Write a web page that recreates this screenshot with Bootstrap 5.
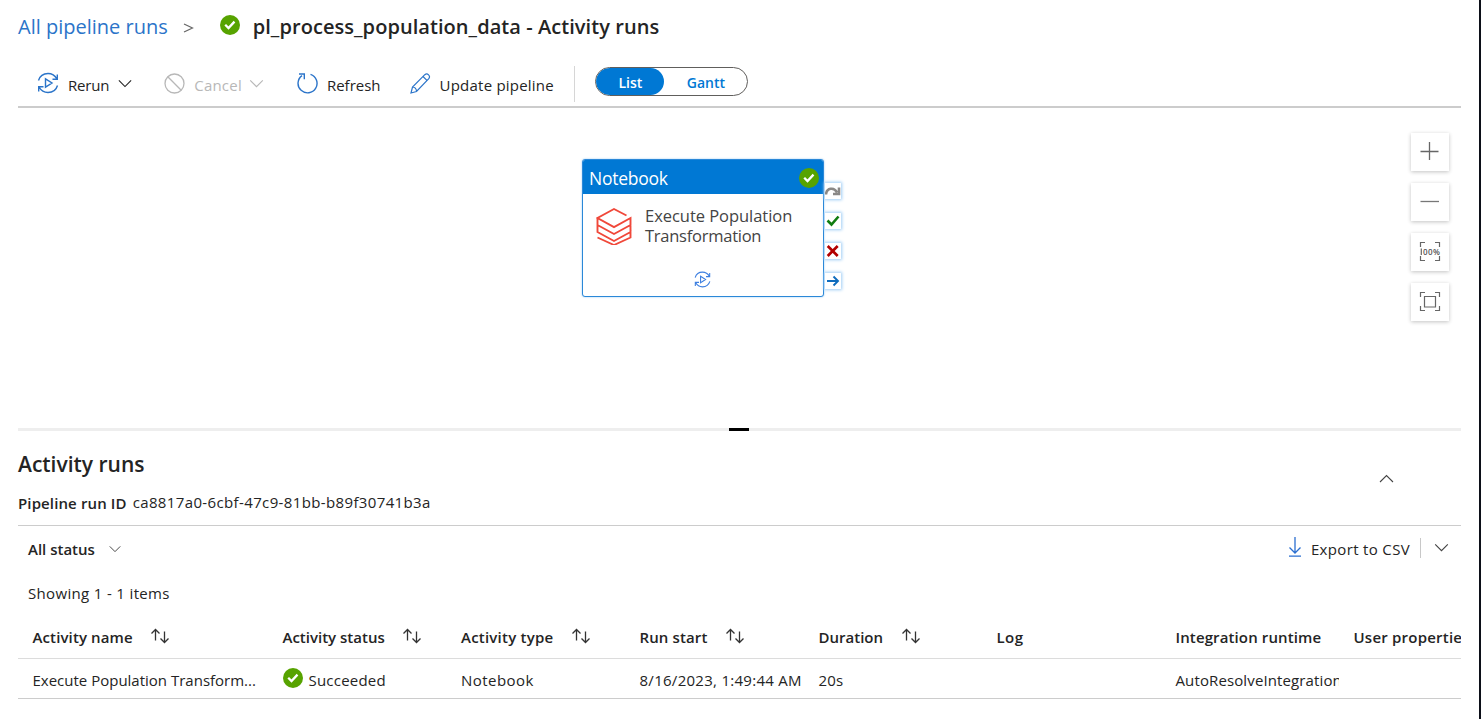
<!DOCTYPE html>
<html lang="en">
<head>
<meta charset="utf-8">
<title>Activity runs</title>
<link href="https://cdn.jsdelivr.net/npm/bootstrap@5.3.0/dist/css/bootstrap.min.css" rel="stylesheet">
<style>
body{font-family:"Open Sans","Noto Sans",sans-serif;font-size:15px;line-height:20px;color:#242424;background:#fff;height:719px;overflow:hidden;border-right:2px solid #0c0f18}
svg{display:block;flex:none;fill:none}
.page{padding:0 18px}
.semi{font-weight:560}
.ls1{letter-spacing:.12px}.ls2{letter-spacing:.22px}.ls3{letter-spacing:.34px}.ls4{letter-spacing:.47px}
.crumbs{height:54px;font-size:20px;white-space:nowrap}
.crumbs a{color:#2b74c9;text-decoration:none}
.crumbs .semi{letter-spacing:.06px}
.gt{margin:2px 0 0 15px}
.crumb-ok{margin:-4px 13px 0 25px}
.tools{height:54px;border-bottom:2px solid #ccc;padding:6px 0 0 19px}
.tool{color:#242424;gap:9px;white-space:nowrap}
.tool span{margin-top:4px}
.tool.off{color:#b8b8b8}
.gap-cancel{margin-left:32px}.gap-refresh{margin-left:33px}.gap-update{margin-left:29px}
.ic{color:#2b74c9}.off .ic{color:#b8b8b8}
.sep{width:1px;height:36px;background:#d6d6d6;margin:2px 20px 0 20px}
.pill{width:153px;height:29px;border:1px solid #605e5c;border-radius:15px;font-size:14px;font-weight:600;color:#0078d4;margin-top:-3px;overflow:hidden}
.pill .on{width:68px;background:#0078d4;color:#fff;border-radius:14px}
.pill>div{padding:2px 0 0 1px}
.canvas{height:320px;position:relative}
.node{position:absolute;left:564px;top:51px;width:242px;height:138px;border:1px solid #2b88d8;border-radius:3px;background:#fff;box-shadow:0 0 2px #8cc4f3}
.nhead{height:34px;background:#0078d4;color:#fff;font-size:17.5px;letter-spacing:-.25px;padding:1px 4px 0 6px;border-radius:2px 2px 0 0}
.nbody{font-size:16.5px;color:#444;padding:12px 0 0 13px;gap:13px;white-space:nowrap}
.nbody .line{height:20px;line-height:20px;letter-spacing:-.04px}
.nbody .tight{letter-spacing:-.25px}
.nbody svg{margin-top:1px}
.nfoot{margin:25px 0 0 111px;color:#3d7fe0}
.ports{position:absolute;left:807px;top:75px;display:grid;gap:14px}
.port{width:16px;height:16px;background:#fff;box-shadow:0 0 3px 1px #9fcdf5}
.zooms{position:absolute;right:12px;top:25px;display:grid;gap:12px}
.zbtn{width:38px;height:38px;background:#fff;box-shadow:0 1px 4px rgba(0,0,0,.24)}
.zbtn text{font:600 8px "Open Sans",sans-serif;fill:#555}
.split{height:3px;background:#eee}
.split i{display:block;width:20px;height:3px;background:#000;margin-left:711px}
.summary{height:95px;border-bottom:1px solid #ccc;padding:23px 67px 0 0}
.summary h2{font-size:21px;line-height:20px;margin:0 0 19px}
.summary .rid{margin:-1px 0 0 6px;letter-spacing:.37px}
.filters{height:46px;padding:0 13px 0 10px}
.vbar{width:1px;height:20px;background:#c8c8c8;margin:-2px 13px 0 10px}
.count{height:44px;padding:11px 0 0 10px}
.tblwrap{overflow:hidden}
.runs{table-layout:fixed;width:1450px;border-collapse:collapse}
.runs th,.runs td{padding:0 0 0 14.5px;overflow:hidden;white-space:nowrap;vertical-align:middle}
.runs th{height:42px;border-bottom:1px solid #dcdcdc;font-weight:560;padding-top:1px}
.runs td{height:40px;border-bottom:1px solid #ccc;padding-top:3px}
.runs .sort{margin:-3px 0 0 17.5px}
</style>
</head>
<body>
<svg width="0" height="0" class="position-absolute"><defs>
<symbol id="ok" viewBox="0 0 20 20"><circle cx="10" cy="10" r="10" fill="#57a300"/><path d="M5.200 9.700l3.300 3.300 6-6.400" stroke="#fff" stroke-width="2.300" fill="none"/></symbol>
<symbol id="rerun" viewBox="0 0 22 22"><path d="M1.500 8.500C3 3.500 7 1.500 11 1.500c4 0 7 2 9 5.500M20.500 13.500c-1.500 5-5.500 7-9.500 7-4 0-7-2-9-5.500M20.300 2.500V7.300H15.500M1.700 19.500V14.700H6.500M8.500 6.800l6.500 4.200-6.500 4.200z" stroke="currentColor" stroke-width="1.400" fill="none"/></symbol>
<symbol id="down" viewBox="0 0 16 10"><path d="M1 1.500l7 7 7-7" stroke="currentColor" stroke-width="1.300" fill="none"/></symbol>
<symbol id="sort" viewBox="0 0 20 16"><path d="M5.500 12.500V1.500M1.500 5.500l4-4 4 4M14.500 3.500v11M10.500 10.500l4 4 4-4" stroke="#333" stroke-width="1.300" fill="none"/></symbol>
</defs></svg>
<main class="page">
 <header class="crumbs d-flex align-items-center">
  <a href="#">All pipeline runs</a>
  <svg class="gt" width="12" height="12" viewBox="0 0 12 12"><path d="M1 2l8.500 4L1 10" stroke="#666" stroke-width="1.200"/></svg>
  <svg class="crumb-ok" width="20" height="20"><use href="#ok"/></svg>
  <span class="semi">pl_process_population_data - Activity runs</span>
 </header>

 <div class="tools d-flex align-items-center">
  <div class="tool d-flex align-items-center"><svg class="ic" width="22" height="22"><use href="#rerun"/></svg><span style="letter-spacing:-.2px">Rerun</span><svg class="ms-n1" width="14" height="9"><use href="#down"/></svg></div>
  <div class="tool off gap-cancel d-flex align-items-center"><svg class="ic" width="21" height="21" viewBox="0 0 21 21"><circle cx="10.500" cy="10.500" r="9.500" stroke="currentColor" stroke-width="1.300"/><path d="M3.800 3.800l13.400 13.400" stroke="currentColor" stroke-width="1.300"/></svg><span class="ls2">Cancel</span><svg width="15" height="9" style="margin-left:-2px"><use href="#down"/></svg></div>
  <div class="tool gap-refresh d-flex align-items-center"><svg class="ic" width="21" height="21" viewBox="0 0 21 21"><path d="M13.500 1.300A9.500 9.500 0 1 1 5 2.600M2 1h5.300v5.300" stroke="currentColor" stroke-width="1.400"/></svg><span>Refresh</span></div>
  <div class="tool gap-update d-flex align-items-center"><svg class="ic" width="21" height="21" viewBox="0 0 21 21"><path d="M1 20l1.500-6L14.800 1.700c2.600-2.100 6.100 1.100 4 4L6.500 18.500zM2.500 14c2 .2 3.800 2 4 4M13 3.500l4.200 4.200" stroke="currentColor" stroke-width="1.200"/></svg><span class="ls2">Update pipeline</span></div>
  <div class="sep"></div>
  <div class="pill d-flex"><div class="on d-flex align-items-center justify-content-center">List</div><div class="flex-fill d-flex align-items-center justify-content-center">Gantt</div></div>
 </div>

 <div class="canvas">
  <div class="node">
   <div class="nhead d-flex align-items-center justify-content-between"><span>Notebook</span><svg width="20" height="20"><use href="#ok"/></svg></div>
   <div class="nbody d-flex"><svg width="36" height="38" viewBox="0 0 36 38"><path d="M30.500 8.500L18 2 1.500 11 18 20.200 34.500 11v7L18 27 1.500 18v7L18 34 34.500 25v5.500L18 38 1.500 30.500M1.500 11v7M34.500 18v7" stroke="#f0483a" stroke-width="1.900"/></svg><div><div class="line">Execute Population</div><div class="line tight">Transformation</div></div></div>
   <svg class="nfoot" width="17" height="17"><use href="#rerun"/></svg>
  </div>
  <div class="ports">
   <svg class="port" viewBox="0 0 16 16"><path d="M1 11.500C1.500 5 9 3.500 12 9.500M14 4.500v6.500H8" stroke="#8a8886" stroke-width="2.600"/></svg>
   <svg class="port" viewBox="0 0 16 16"><path d="M2.500 7.500l4 4L13.500 3.500" stroke="#107c10" stroke-width="2.600"/></svg>
   <svg class="port" viewBox="0 0 16 16"><path d="M2.700 3l10 10M12.700 3L2.700 13" stroke="#b30000" stroke-width="2.700"/></svg>
   <svg class="port" viewBox="0 0 16 16"><path d="M2 8h11M8.500 3.500L13 8 8.500 12.500" stroke="#0f6cbd" stroke-width="1.900"/></svg>
  </div>
  <div class="zooms">
   <svg class="zbtn" viewBox="0 0 38 38"><path d="M9.500 18.500h18M18.500 9v18" stroke="#666" stroke-width="1.300"/></svg>
   <svg class="zbtn" viewBox="0 0 38 38"><path d="M9.500 18.500h18.500" stroke="#777" stroke-width="1.300"/></svg>
   <svg class="zbtn" viewBox="0 0 38 38"><path d="M9.500 14V9.500H14M24 9.500h4.500V14M28.500 23v4.500H24M14 27.500H9.500V23M10.300 15.500v6.500" stroke="#666" stroke-width="1.200"/><text x="12" y="21.500" textLength="17">00%</text></svg>
   <svg class="zbtn" viewBox="0 0 38 38"><path d="M9.500 14V9.500H14M24 9.500h4.500V14M28.500 23v4.500H24M14 27.500H9.500V23M13.500 13.500h11v10.500h-11z" stroke="#666" stroke-width="1.200"/></svg>
  </div>
 </div>

 <div class="split"><i></i></div>

 <section class="summary d-flex justify-content-between">
  <div><h2 class="semi">Activity runs</h2>
   <div class="d-flex"><span class="semi ls1">Pipeline run ID</span><span class="rid">ca8817a0-6cbf-47c9-81bb-b89f30741b3a</span></div></div>
  <svg width="15" height="9" viewBox="0 0 15 9" style="margin-top:20px"><path d="M1 8l6.500-6.500L14 8" stroke="#444" stroke-width="1.100"/></svg>
 </section>

 <div class="filters d-flex align-items-center">
  <span class="semi">All status</span><svg width="12" height="8" viewBox="0 0 16 10" style="margin-left:14px;color:#444"><use href="#down"/></svg>
  <svg class="ms-auto" width="14" height="20" viewBox="0 0 14 20" style="margin:-4px 9px 0 0"><path d="M7 0v16M1.500 10.500L7 16l5.500-5.500M1 19.200h12" stroke="#2b6fd0" stroke-width="1.300"/></svg>
  <span class="ls3">Export to CSV</span><div class="vbar"></div><svg width="15" height="9" style="margin:-3px -1px 0 0;color:#444"><use href="#down"/></svg>
 </div>
 <div class="count d-flex ls3">Showing 1 - 1 items</div>

 <div class="tblwrap">
 <table class="runs">
  <colgroup><col style="width:250px"><col style="width:178.500px"><col style="width:178.500px"><col style="width:179px"><col style="width:178px"><col style="width:179px"><col style="width:178px"><col></colgroup>
  <thead><tr>
   <th><div class="d-flex align-items-center ls1">Activity name<svg class="sort" width="20" height="16"><use href="#sort"/></svg></div></th>
   <th><div class="d-flex align-items-center">Activity status<svg class="sort" width="20" height="16"><use href="#sort"/></svg></div></th>
   <th><div class="d-flex align-items-center ls2">Activity type<svg class="sort" width="20" height="16"><use href="#sort"/></svg></div></th>
   <th><div class="d-flex align-items-center ls1">Run start<svg class="sort" width="20" height="16"><use href="#sort"/></svg></div></th>
   <th><div class="d-flex align-items-center">Duration<svg class="sort" width="20" height="16"><use href="#sort"/></svg></div></th>
   <th class="ls4">Log</th><th class="ls1">Integration runtime</th><th class="ls2">User properties</th>
  </tr></thead>
  <tbody><tr>
   <td>Execute Population Transform...</td>
   <td><div class="d-flex align-items-center"><svg width="20" height="20" style="margin:-4px 6px 0 0"><use href="#ok"/></svg><span class="ls2">Succeeded</span></div></td>
   <td class="ls4">Notebook</td><td style="letter-spacing:.28px">8/16/2023, 1:49:44 AM</td><td class="ls2">20s</td><td></td>
   <td class="ls1">AutoResolveIntegrationRuntime</td><td></td>
  </tr></tbody>
 </table>
 </div>
</main>
<script src="https://cdn.jsdelivr.net/npm/bootstrap@5.3.0/dist/js/bootstrap.bundle.min.js"></script>
</body>
</html>
